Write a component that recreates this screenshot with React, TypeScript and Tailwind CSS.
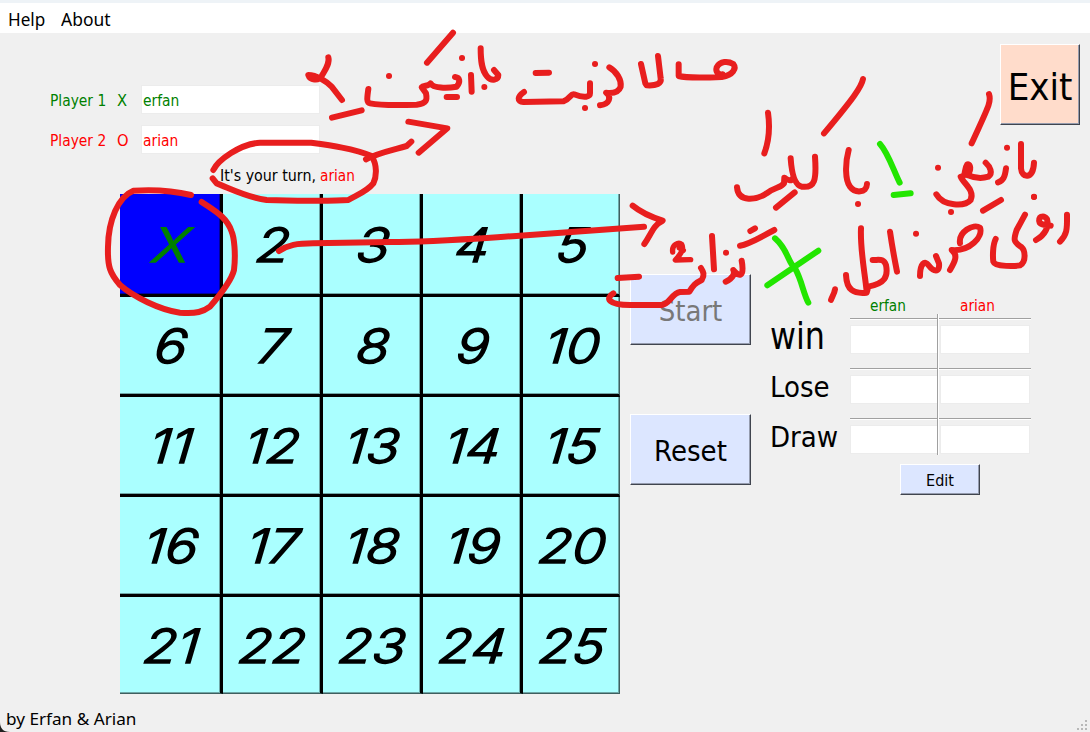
import React from "react";

const ui = "font-['DejaVu_Sans_Condensed','DejaVu_Sans',sans-serif] [font-stretch:condensed]";

function Label({ children, className = "" }: { children: React.ReactNode; className?: string }) {
  return <span className={"inline-block origin-left whitespace-pre " + className}>{children}</span>;
}

function Push({ children, className = "" }: { children: React.ReactNode; className?: string }) {
  return (
    <button
      className={
        "flex shrink-0 items-center justify-center border border-t-white border-l-white border-r-[#40454f] border-b-[#40454f] shadow-[inset_-1px_-1px_0_#959cae] " +
        className
      }
    >
      {children}
    </button>
  );
}

function Player({ name, mark, value, color }: { name: string; mark: string; value: string; color: string }) {
  return (
    <div className={"flex h-[29px] items-center pl-[50px] text-[16px] " + color}>
      <div className="w-[67px] pt-[2px]">
        <Label className="scale-x-[0.96]">{name}</Label>
      </div>
      <div className="w-[24px] pt-[2px]">
        <Label className="scale-x-[1.02]">{mark}</Label>
      </div>
      <div className="flex h-[29px] w-[179px] items-center border border-[#ececec] bg-white pt-[2px] pl-[1px]">
        <Label className="scale-x-[0.96]">{value}</Label>
      </div>
    </div>
  );
}

function Board() {
  const cells = Array.from({ length: 25 }, (_, i) => i);
  return (
    <div className="ml-[120px] grid h-[500px] w-[500px] grid-cols-[103px_100px_100px_100px_97px] grid-rows-[103px_100px_100px_100px_97px] bg-black">
      {cells.map((i) => {
        const right = i % 5 === 4;
        const bottom = i >= 20;
        return (
          <div
            key={i}
            className={
              "flex items-center justify-center border-black pl-[3px] " +
              (right ? "border-r border-r-[#3f5f5f] " : "border-r-[3px] ") +
              (bottom ? "border-b border-b-[#3f5f5f] " : "border-b-[3px] ") +
              (i === 0
                ? "bg-[#0000ff] text-[#008000] shadow-[inset_-1px_-1px_0_#0000a0]"
                : "bg-[#aaffff] text-black shadow-[inset_-1px_-1px_0_#6fa7a7]")
            }
          >
            <span className="inline-block scale-x-[1.16] skew-x-[-5deg] font-['Inter',sans-serif] text-[47px] leading-none font-light italic [-webkit-text-stroke:1.6px_currentColor] [stroke-linejoin:round]">
              {i === 0 ? "X" : i + 1}
            </span>
          </div>
        );
      })}
    </div>
  );
}

function ScoreRow({ label, size }: { label: string; size: string }) {
  return (
    <div className="flex h-[50px]">
      <div className="flex h-[36px] w-[80px] items-center">
        <Label className={size}>{label}</Label>
      </div>
      <div className="w-[181px] border-t border-[#a0a0a0]">
        <div className="mb-[5px] h-px bg-white" />
        <div className="flex h-[29px]">
          <div className="h-[29px] w-[87px] border border-r-0 border-[#ececec] bg-white" />
          <div className="ml-[3px] h-[29px] w-[90px] border border-[#ececec] bg-white" />
        </div>
      </div>
    </div>
  );
}

const third = "scale(0.33333)";

function Ink() {
  return (
    <svg
      className="pointer-events-none absolute inset-0"
      width="1090"
      height="732"
      fill="none"
      stroke="#e81e1e"
      strokeWidth="18"
      strokeLinecap="round"
      strokeLinejoin="round"
    >
      <path strokeWidth="6" d="M279 251C288 245 297 243.3 313 243.3L390 242C430 242 475 238.5 523 235.5L644 226.8" />
      <g transform={"translate(100 140) " + third}>
        <path d="M340 90C355 60 420 12 480 8L630 8C690 16 760 25 815 48C832 75 830 110 820 130C800 155 770 165 745 180C700 184 560 182 500 180C440 172 390 145 350 130L338 115" />
        <path d="M273 165C220 152 160 148 100 152C55 170 25 240 24 320C22 380 30 400 60 435C100 470 180 510 240 518C290 522 310 515 330 500C360 465 395 420 402 390C408 340 402 290 395 275C380 230 340 210 305 186" />
      </g>
      <g transform={"translate(290 20) " + third}>
        <path d="M297 168h.1M411 128L489 38M516 114h.1M583 201h.1M470 231L501 231M543 165L545 215" />
        <path d="M115 112C120 130 105 150 95 168C85 185 60 180 55 165C80 165 110 185 125 200L156 240M65 170L85 174M126 293L215 271" />
        <path d="M228 418C260 400 300 392 350 378L364 365M355 305L472 325L386 398" />
        <path d="M235 207C232 230 228 248 240 250C270 256 330 256 380 254C410 250 412 240 408 220L395 202C400 195 415 200 422 190C430 205 470 205 500 200C512 185 510 173 495 171" />
        <path d="M572 85C572 120 574 150 592 170C605 185 625 180 625 165L612 150" />
      </g>
      <g transform={"translate(500 30) " + third}>
        <path d="M107 129L147 128M285 102h.1M255 234h.1M72 186C52 200 50 215 70 216L190 214C210 208 212 190 222 193C255 206 270 200 270 190L270 160" />
        <path d="M328 112C350 125 365 150 362 170C355 190 335 190 318 188C335 200 330 222 300 226M423 102L436 160L440 166C470 168 485 160 482 145L474 78" />
        <path d="M536 103L536 138C560 145 640 142 665 141C700 135 710 115 700 102C685 93 660 92 650 112C646 125 655 135 668 133" />
      </g>
      <g transform={"translate(720 60) " + third}>
        <path d="M144 158C150 200 148 240 133 280M429 57C425 80 400 115 312 220M807 102C815 125 805 140 755 250" />
        <path d="M51 382C55 430 110 420 140 400C165 380 180 385 192 370L193 353C205 363 215 363 218 355M212 295C215 340 225 375 245 380C285 385 290 360 285 290M224 397L168 443" />
        <path d="M386 270C375 310 375 360 390 380C405 400 440 400 441 372M414 432h.1M654 323h.1M861 263h.1M942 411h.1" />
        <path d="M649 403C670 440 735 440 752 420C765 390 730 370 722 350C740 350 730 330 742 313C752 310 755 330 742 345M742 345C765 355 790 355 805 350C820 340 810 320 797 308" />
        <path d="M858 325C855 350 850 362 834 367M903 252L903 325C905 355 940 360 942 308" />
        <path stroke="#22e600" d="M480 252C505 280 520 330 539 368M521 405L572 400" />
      </g>
      <g transform={"translate(590 190) " + third}>
        <path d="M128 47C150 65 180 80 218 92C190 105 185 130 163 162M83 264L147 260" />
        <path d="M70 310C45 325 55 345 120 345L215 345C240 342 245 310 270 306L298 305C310 285 315 280 335 270C345 255 340 245 333 234" />
        <path strokeWidth="16" d="M248 186C245 165 265 155 275 163C285 180 265 200 256 210L302 209M268 174L280 181" />
        <path d="M366 138L372 238M408 188h.1M407 275C430 265 435 250 430 240C445 260 465 265 455 212M450 167C480 162 510 142 553 120M481 123L495 115M735 298C733 312 726 320 723 330" />
        <path stroke="#22e600" d="M555 145C595 180 592 215 615 235C635 270 640 310 655 338M532 286L685 182" />
      </g>
      <g transform={"translate(800 190) " + third}>
        <path d="M183 115C180 180 195 250 200 305M138 255C140 300 160 312 200 308L205 290C255 280 265 260 258 225C250 205 240 210 218 210M270 125C275 160 282 200 291 245" />
        <path d="M348 131h.1M453 66h.1M702 20h.1M549 62L603 30M360 258C360 220 375 210 385 225C400 245 420 250 417 220L408 198" />
        <path d="M480 160C475 125 520 100 540 113C550 140 510 185 455 180C475 195 465 215 450 240" />
        <path d="M587 147C578 165 578 200 580 215C585 232 650 228 660 226C680 215 675 180 665 172C640 155 640 150 650 120L675 74" />
        <path d="M708 150C735 135 748 110 741 87C730 73 712 80 719 98C726 106 740 104 752 107M801 74C802 120 800 135 780 155" />
      </g>
    </svg>
  );
}

export default function App() {
  return (
    <div className={"relative flex h-[732px] w-[1090px] flex-col overflow-hidden bg-[#f0f0f0] text-black " + ui}>
      <div className="h-[3px] shrink-0 bg-[#eef3f7]" />
      <nav className="flex h-[30px] shrink-0 items-center bg-white pt-[2px] pl-[8px] font-['Noto_Sans',sans-serif] text-[18px]">
        <div className="w-[53px]">
          <Label className="scale-x-[0.95]">Help</Label>
        </div>
        <Label className="scale-x-[0.97]">About</Label>
      </nav>

      <main className="flex h-[671px] shrink-0">
        <section className="w-[630px] shrink-0 pt-[52px]">
          <Player name="Player 1" mark="X" value="erfan" color="text-[#008000]" />
          <div className="h-[11px]" />
          <Player name="Player 2" mark="O" value="arian" color="text-[#ff0000]" />
          <div className="flex h-[40px] items-center pt-[3px] pl-[220px] text-[16px]">
            <div className="w-[100px]">
              <Label className="scale-x-[0.99]">It's your turn,</Label>
            </div>
            <Label className="scale-x-[0.95] text-[#ff0000]">arian</Label>
          </div>
          <Board />
        </section>

        <section className="flex w-[140px] shrink-0 flex-col gap-[69px] pt-[241px]">
          <Push className="h-[71px] w-[121px] bg-[#dce6ff] pt-[5px] text-[29px] text-[#787878]">
            <span>Start</span>
          </Push>
          <Push className="h-[71px] w-[121px] bg-[#dce6ff] pt-[5px] text-[29px]">
            <span>Reset</span>
          </Push>
        </section>

        <section className="flex w-[320px] shrink-0 flex-col">
          <div className="flex h-[262px] justify-end pt-[11px] pr-[10px]">
            <Push className="h-[81px] w-[80px] bg-[#ffdccb] pt-[6px] text-[38px]">
              <span>Exit</span>
            </Push>
          </div>
          <div className="flex h-[23px] pl-[100px] text-[16px] leading-[21px]">
            <div className="w-[90px] text-[#008000]">
              <Label className="scale-x-[0.95]">erfan</Label>
            </div>
            <Label className="scale-x-[0.95] text-[#ff0000]">arian</Label>
          </div>
          <div className="relative h-[146px]">
            <ScoreRow label="win" size="scale-x-[0.93] text-[38px]" />
            <ScoreRow label="Lose" size="text-[29px] pt-[3px]" />
            <ScoreRow label="Draw" size="text-[29px] pt-[3px]" />
            <div className="absolute top-[-4px] left-[167px] h-[141px] w-[2px] border-l border-[#a0a0a0] bg-white" />
          </div>
          <Push className="ml-[130px] h-[31px] w-[80px] bg-[#dce6ff] pt-[2px] text-[16px]">
            <span>Edit</span>
          </Push>
        </section>
      </main>

      <footer className="flex h-[28px] shrink-0 items-center pt-[1px] pl-[6px] font-['Noto_Sans',sans-serif] text-[17px]">
        <Label className="scale-x-[1.01]">by Erfan &amp; Arian</Label>
      </footer>

      <Ink />
      <svg className="absolute bottom-0 left-0" width="10" height="10">
        <path d="M0 0C0 6 3 10 10 10L0 10Z" fill="#202020" />
      </svg>
      <svg className="absolute right-0 bottom-0" width="14" height="14" fill="#b8b8b8">
        <path d="M9 2h2v2h-2zM9 6h2v2h-2zM5 6h2v2h-2zM9 10h2v2h-2zM5 10h2v2h-2zM1 10h2v2h-2z" />
      </svg>
    </div>
  );
}
